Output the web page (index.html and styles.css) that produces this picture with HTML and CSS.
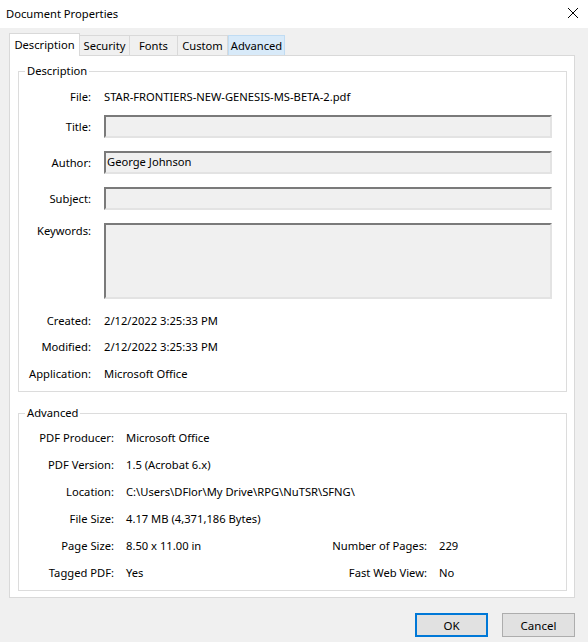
FILE: index.html
```html
<!DOCTYPE html>
<html lang="en">
<head>
<meta charset="UTF-8">
<meta name="viewport" content="width=device-width, initial-scale=1.0">
<title>Document Properties</title>
<link rel="stylesheet" href="styles.css">
</head>
<body>

<!-- Title bar -->
<div class="titlebar">
    <span class="title">Document Properties</span>
    <svg class="close" width="12" height="12" viewBox="0 0 12 12">
        <path d="M1 1 L11 11 M11 1 L1 11" stroke="#000" stroke-width="1" fill="none"/>
    </svg>
</div>

<div class="dialog">
    <!-- Tabs -->
    <div class="tabs">
        <div class="tab selected">Description</div>
        <div class="tab">Security</div>
        <div class="tab">Fonts</div>
        <div class="tab">Custom</div>
        <div class="tab hover">Advanced</div>
    </div>

    <div class="panel">
        <!-- Description group -->
        <fieldset class="group desc">
            <legend>Description</legend>
            <div class="desc-grid">
                <div class="label">File:</div>
                <div class="value">STAR-FRONTIERS-NEW-GENESIS-MS-BETA-2.pdf</div>

                <div class="label">Title:</div>
                <div class="field"></div>

                <div class="label">Author:</div>
                <div class="field">George Johnson</div>

                <div class="label">Subject:</div>
                <div class="field"></div>

                <div class="label top">Keywords:</div>
                <div class="field area"></div>

                <div class="label">Created:</div>
                <div class="value">2/12/2022 3:25:33 PM</div>

                <div class="label">Modified:</div>
                <div class="value">2/12/2022 3:25:33 PM</div>

                <div class="label">Application:</div>
                <div class="value">Microsoft Office</div>
            </div>
        </fieldset>

        <!-- Advanced group -->
        <fieldset class="group adv">
            <legend>Advanced</legend>
            <div class="adv-grid">
                <div class="label">PDF Producer:</div>
                <div class="value wide">Microsoft Office</div>

                <div class="label">PDF Version:</div>
                <div class="value wide">1.5 (Acrobat 6.x)</div>

                <div class="label">Location:</div>
                <div class="value wide">C:\Users\DFlor\My Drive\RPG\NuTSR\SFNG\</div>

                <div class="label">File Size:</div>
                <div class="value wide">4.17 MB (4,371,186 Bytes)</div>

                <div class="label">Page Size:</div>
                <div class="value">8.50 x 11.00 in</div>
                <div class="label">Number of Pages:</div>
                <div class="value">229</div>

                <div class="label">Tagged PDF:</div>
                <div class="value">Yes</div>
                <div class="label">Fast Web View:</div>
                <div class="value">No</div>
            </div>
        </fieldset>
    </div>

    <!-- Buttons -->
    <div class="buttons">
        <button class="btn default">OK</button>
        <button class="btn">Cancel</button>
    </div>
</div>

</body>
</html>
```

FILE: styles.css
```css
body {
    margin: 0;
    padding: 0;
    width: 588px;
    height: 642px;
    overflow: hidden;
    background-color: #f0f0f0;
    font-family: "Noto Sans", "Open Sans", sans-serif;
    font-size: 11.2px;
    color: #000;
}

/* Title bar */
.titlebar {
    height: 28px;
    background-color: #fff;
    display: flex;
    align-items: center;
    justify-content: space-between;
    padding: 0 9px 2px 6px;
    box-sizing: border-box;
}

.titlebar .title {
    font-size: 11.2px;
}

.dialog {
    padding: 5px 13px 0 9px;
}

/* Tabs */
.tabs {
    display: flex;
    align-items: flex-end;
    height: 22px;
    position: relative;
    z-index: 1;
}

.tab {
    height: 20px;
    line-height: 19px;
    box-sizing: border-box;
    text-align: center;
    border: 1px solid #d9d9d9;
    border-bottom: none;
    border-left: none;
    background-color: #f0f0f0;
    white-space: nowrap;
}

.tab:nth-child(2) { width: 50px; }
.tab:nth-child(3) { width: 48px; }
.tab:nth-child(4) { width: 50px; }
.tab:nth-child(5) { width: 57px; }

.tab.selected {
    width: 71px;
    height: 23px;
    margin-bottom: -1px;
    line-height: 21px;
    background-color: #fff;
    border-left: 1px solid #d9d9d9;
}

.tab.hover {
    background-color: #d8eaf9;
    border: 1px solid #c0dcf3;
    border-bottom: none;
}

/* Panel */
.panel {
    width: 566px;
    height: 543px;
    box-sizing: border-box;
    border: 1px solid #d9d9d9;
    background-color: #fff;
    padding: 7px 7px 0 8px;
}

.group {
    margin: 0;
    border: 1px solid #dcdcdc;
    padding: 0 14px 0 0;
    min-width: 0;
    box-sizing: border-box;
}

.group legend {
    margin-left: 6px;
    padding: 0 2px;
    line-height: 16px;
}

.group.desc {
    height: 329px;
    padding-top: 4px;
}

.group.adv {
    margin-top: 13px;
    height: 186px;
    padding-top: 3px;
}

.label {
    text-align: right;
    white-space: nowrap;
    align-self: center;
}

.label.top {
    align-self: start;
    margin-top: 7px;
}

.value {
    white-space: nowrap;
    align-self: center;
}

/* Description grid */
.desc-grid {
    display: grid;
    grid-template-columns: 72px 1fr;
    grid-template-rows: 26px 35px 36px 36px 91px 26px 27px 26px;
    column-gap: 13px;
}

.field {
    height: 23px;
    box-sizing: border-box;
    background-color: #f0f0f0;
    border-top: 2px solid #7a7a7a;
    border-left: 2px solid #7a7a7a;
    border-right: 2px solid #e3e3e3;
    border-bottom: 2px solid #e3e3e3;
    padding: 0 1px;
    line-height: 18px;
    align-self: center;
}

.field.area {
    height: 76px;
    align-self: start;
    margin-top: 7px;
}

/* Advanced grid */
.adv-grid {
    display: grid;
    grid-template-columns: 95px 180px 109px auto;
    grid-auto-rows: 27px;
    column-gap: 12px;
}

.adv-grid .wide {
    grid-column: 2 / 5;
}

/* Buttons */
.buttons {
    display: flex;
    justify-content: flex-end;
    gap: 14px;
    margin-top: 15px;
}

.btn {
    width: 73px;
    height: 24px;
    box-sizing: border-box;
    background-color: #e1e1e1;
    border: 1px solid #adadad;
    font-family: "Noto Sans", "Open Sans", sans-serif;
    font-size: 11.5px;
    color: #000;
    padding: 0;
}

.btn.default {
    border: 2px solid #0078d7;
}
```
